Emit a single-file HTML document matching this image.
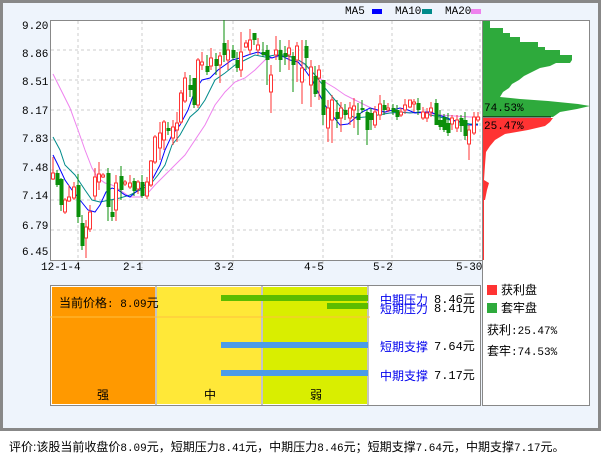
<!DOCTYPE html>
<html><head><meta charset="utf-8"><style>
*{margin:0;padding:0}
body{width:601px;height:456px;background:#fff;position:relative;overflow:hidden;font-family:"Liberation Mono","Noto Sans CJK SC",monospace;}
.frame{position:absolute;left:0;top:0;width:595px;height:425px;border:3px solid #888;background:#eef4fc}
.t{position:absolute;font-size:11px;color:#000;white-space:nowrap;line-height:12px}
.c{position:absolute;font-family:"Liberation Sans","Noto Sans CJK SC",sans-serif;font-size:12px;white-space:nowrap;line-height:14px}
</style></head><body>
<div class="frame"></div>
<svg style="position:absolute;left:0;top:0" width="601" height="456">
<rect x="50.5" y="20.5" width="432" height="240" fill="#fff" stroke="#888"/>
<rect x="482.5" y="20.5" width="107" height="385" fill="#fff" stroke="#888"/>
<g stroke="#ccc" stroke-dasharray="3,3">
<line x1="51" x2="482" y1="50" y2="50"/><line x1="51" x2="482" y1="80" y2="80"/><line x1="51" x2="482" y1="110" y2="110"/><line x1="51" x2="482" y1="140" y2="140"/><line x1="51" x2="482" y1="170" y2="170"/><line x1="51" x2="482" y1="200" y2="200"/><line x1="51" x2="482" y1="230" y2="230"/>
<line x1="78" x2="78" y1="21" y2="268"/><line x1="142" x2="142" y1="21" y2="268"/><line x1="233" x2="233" y1="21" y2="268"/><line x1="323" x2="323" y1="21" y2="268"/><line x1="392" x2="392" y1="21" y2="268"/><line x1="480" x2="480" y1="21" y2="268"/>
</g>
<polyline fill="none" stroke="#ee82ee" points="53,74 60,88 70,108 78,130 85,150 92,168 98,178 105,183 112,185 120,190 130,197 140,197 148,193 155,185 165,175 175,165 185,155 195,140 205,125 215,105 225,92 235,82 245,78 255,70 265,60 275,57 285,56 295,58 305,65 315,75 325,82 335,88 345,95 355,100 365,105 375,110 385,113 395,113 405,112 415,113 425,113 440,115 455,116 470,117 478,117"/>
<polyline fill="none" stroke="#008b8b" points="53,137 60,150 65,165 75,175 85,190 92,200 100,202 110,200 120,198 130,195 140,190 150,185 158,175 165,165 172,145 180,135 190,117 198,110 205,100 215,80 225,73 235,65 245,60 255,55 265,57 275,55 285,55 295,58 305,64 315,75 325,88 335,100 345,112 355,118 365,117 378,115 390,113 400,112 410,113 420,112 430,115 440,117 450,120 460,122 470,124 478,124"/>
<polyline fill="none" stroke="#0000ff" points="53,155 58,165 65,180 72,190 80,200 88,210 95,212 100,205 106,192 112,188 118,190 125,195 130,197 138,190 145,185 152,180 160,165 165,150 172,135 180,125 188,110 195,90 202,80 210,78 218,70 225,65 232,60 240,58 248,55 258,52 265,55 272,58 280,55 290,60 298,62 305,70 312,80 318,92 325,105 332,115 340,125 348,124 355,118 362,112 370,108 378,110 385,112 393,110 400,108 408,110 415,113 423,112 430,112 438,115 445,117 452,120 460,122 468,125 478,125"/>
<g id="cd"></g>
<path fill="none" stroke="#ff3333" d="M53 157V180M65 198V214M69 185V202M74 182V200M86 220V258M90 205V232M95 168V200M99 162V190M103 173V178M116 175V221M125 180V186M130 175V189M138 180V194M147 177V199M151 160V187M155 135V164M160 122V160M164 120V150M173 120V145M177 112V142M181 90V124M185 72V103M198 58V108M202 52V70M211 48V70M220 52V83M228 40V70M241 32V77M246 40V48M250 29V55M258 38V55M271 65V113M276 36V60M289 40V70M297 42V82M302 40V104M311 60V107M319 65V100M328 100V142M332 95V143M341 102V132M350 102V125M354 98V128M375 106V128M380 95V120M388 103V112M401 108V117M405 99V114M410 100V108M414 99V112M423 107V120M427 108V122M431 102V117M452 115V130M457 115V132M469 125V160M474 112V135M478 112V122"/>
<g fill="#fff" stroke="#ff3333">
<rect x="51.5" y="173" width="3" height="6"/><rect x="63.5" y="200" width="3" height="12"/><rect x="67.5" y="197" width="3" height="4"/><rect x="72.5" y="187" width="3" height="11"/><rect x="84.5" y="227" width="3" height="11"/><rect x="88.5" y="212" width="3" height="17"/><rect x="93.5" y="177" width="3" height="19"/><rect x="97.5" y="174" width="3" height="8"/><rect x="101.5" y="175" width="3" height="2"/><rect x="114.5" y="183" width="3" height="27"/><rect x="123.5" y="182" width="3" height="2"/><rect x="128.5" y="183" width="3" height="4"/><rect x="136.5" y="182" width="3" height="7"/><rect x="145.5" y="182" width="3" height="14"/><rect x="149.5" y="161" width="3" height="24"/><rect x="153.5" y="137" width="3" height="25"/><rect x="158.5" y="133" width="3" height="15"/><rect x="162.5" y="122" width="3" height="18"/><rect x="171.5" y="127" width="3" height="11"/><rect x="175.5" y="123" width="3" height="7"/><rect x="179.5" y="93" width="3" height="29"/><rect x="183.5" y="78" width="3" height="23"/><rect x="196.5" y="60" width="3" height="45"/><rect x="200.5" y="62" width="3" height="3"/><rect x="209.5" y="58" width="3" height="8"/><rect x="218.5" y="56" width="3" height="9"/><rect x="226.5" y="50" width="3" height="10"/><rect x="239.5" y="52" width="3" height="18"/><rect x="244.5" y="43" width="3" height="4"/><rect x="248.5" y="40" width="3" height="10"/><rect x="256.5" y="45" width="3" height="5"/><rect x="269.5" y="75" width="3" height="17"/><rect x="274.5" y="50" width="3" height="5"/><rect x="287.5" y="48" width="3" height="7"/><rect x="295.5" y="46" width="3" height="14"/><rect x="300.5" y="68" width="3" height="14"/><rect x="309.5" y="67" width="3" height="18"/><rect x="317.5" y="70" width="3" height="8"/><rect x="326.5" y="108" width="3" height="20"/><rect x="330.5" y="100" width="3" height="20"/><rect x="339.5" y="108" width="3" height="10"/><rect x="348.5" y="108" width="3" height="10"/><rect x="352.5" y="106" width="3" height="4"/><rect x="373.5" y="112" width="3" height="13"/><rect x="378.5" y="104" width="3" height="11"/><rect x="386.5" y="108" width="3" height="2"/><rect x="399.5" y="112" width="3" height="3"/><rect x="403.5" y="105" width="3" height="5"/><rect x="408.5" y="100" width="3" height="7"/><rect x="412.5" y="102" width="3" height="2"/><rect x="421.5" y="112" width="3" height="6"/><rect x="425.5" y="113" width="3" height="5"/><rect x="429.5" y="108" width="3" height="4"/><rect x="450.5" y="118" width="3" height="6"/><rect x="455.5" y="120" width="3" height="8"/><rect x="467.5" y="130" width="3" height="14"/><rect x="472.5" y="117" width="3" height="16"/><rect x="476.5" y="117" width="3" height="3"/>
</g>
<path fill="none" stroke="#0a8f0a" d="M57 170V187M61 178V211M78 174V223M82 215V250M108 168V221M112 200V221M121 166V200M134 178V196M142 175V198M168 122V135M190 75V97M194 78V108M207 55V75M216 53V75M224 20V62M233 45V60M237 52V72M254 33V45M263 42V57M267 45V85M280 40V72M285 46V65M293 52V92M306 40V70M315 66V97M323 80V125M337 100V128M345 104V120M358 103V135M362 100V113M367 110V145M371 108V130M384 100V115M393 104V115M397 105V120M418 98V115M436 99V125M440 110V130M444 114V132M448 113V136M461 115V132M465 112V140"/>
<g fill="#0a8f0a">
<rect x="55.5" y="173" width="4" height="12"/><rect x="59.5" y="179" width="4" height="26"/><rect x="76.5" y="185" width="4" height="32"/><rect x="80.5" y="223" width="4" height="23"/><rect x="106.5" y="173" width="4" height="34"/><rect x="110.5" y="212" width="4" height="5"/><rect x="119.5" y="176" width="4" height="14"/><rect x="132.5" y="181" width="4" height="10"/><rect x="140.5" y="182" width="4" height="14"/><rect x="166.5" y="128" width="4" height="3"/><rect x="188.5" y="85" width="4" height="5"/><rect x="192.5" y="78" width="4" height="27"/><rect x="205.5" y="66" width="4" height="6"/><rect x="214.5" y="59" width="4" height="7"/><rect x="222.5" y="43" width="4" height="12"/><rect x="231.5" y="50" width="4" height="8"/><rect x="235.5" y="60" width="4" height="8"/><rect x="252.5" y="33" width="4" height="7"/><rect x="261.5" y="52" width="4" height="3"/><rect x="265.5" y="50" width="4" height="10"/><rect x="278.5" y="50" width="4" height="10"/><rect x="283.5" y="53" width="4" height="4"/><rect x="291.5" y="56" width="4" height="9"/><rect x="304.5" y="46" width="4" height="12"/><rect x="313.5" y="76" width="4" height="18"/><rect x="321.5" y="80" width="4" height="35"/><rect x="335.5" y="112" width="4" height="7"/><rect x="343.5" y="110" width="4" height="5"/><rect x="356.5" y="113" width="4" height="7"/><rect x="360.5" y="108" width="4" height="2"/><rect x="365.5" y="112" width="4" height="18"/><rect x="369.5" y="113" width="4" height="7"/><rect x="382.5" y="105" width="4" height="5"/><rect x="391.5" y="108" width="4" height="4"/><rect x="395.5" y="110" width="4" height="7"/><rect x="416.5" y="103" width="4" height="7"/><rect x="434.5" y="103" width="4" height="22"/><rect x="438.5" y="120" width="4" height="7"/><rect x="442.5" y="117" width="4" height="13"/><rect x="446.5" y="123" width="4" height="10"/><rect x="459.5" y="118" width="4" height="8"/><rect x="463.5" y="120" width="4" height="16"/>
</g>
<polygon fill="#2eaa3c" points="483,21 490,21 490,28 503,28 503,33 510,33 510,37 520,37 520,42 538,42 538,47 545,47 545,50 560,50 560,55 572,55 572,60 570,63 556,63 550,66 540,68 532,72 524,76 519,80 512,84 509,88 503,92 500,97 520,99 548,101 578,104 590,106 577,109 560,112 553,117 483,117"/>
<line x1="483" x2="551" y1="117" y2="117" stroke="#000"/>
<polygon fill="#ff3333" points="483,118 553,118 550,122 545,126 528,130 505,134 495,140 490,146 486,152 485,165 484,180 489,183 487,190 485,200 484,200 484,260 483,260"/>
<rect x="487" y="285" width="10" height="10" fill="#ff3333"/>
<rect x="487" y="303" width="10" height="10" fill="#2eaa3c"/>
<rect x="372" y="9" width="10" height="5" fill="#0000ff"/>
<rect x="422" y="9" width="10" height="5" fill="#008b8b"/>
<rect x="471" y="9" width="10" height="5" fill="#ee82ee"/>
<rect x="50.5" y="285.5" width="430" height="120" fill="#fff" stroke="#888"/>
<rect x="52" y="287" width="103" height="117" fill="#ff9900"/>
<rect x="157" y="287" width="104" height="117" fill="#ffe838"/>
<rect x="263" y="287" width="104" height="117" fill="#d9ee00"/>
<line x1="156" x2="156" y1="286" y2="405" stroke="#888"/><line x1="262" x2="262" y1="286" y2="405" stroke="#888"/><line x1="368" x2="368" y1="286" y2="405" stroke="#888"/>
<line x1="50" x2="370" y1="317" y2="317" stroke="#ffc040"/>
<rect x="221" y="295" width="147" height="6" fill="#5cbc00"/>
<rect x="327" y="303" width="41" height="6" fill="#5cbc00"/>
<rect x="221" y="342" width="147" height="6" fill="#4b9be8"/>
<rect x="221" y="370" width="147" height="6" fill="#4b9be8"/>
</svg>
<div class="t" style="left:345px;top:6px">MA5</div>
<div class="t" style="left:395px;top:6px">MA10</div>
<div class="t" style="left:445px;top:6px">MA20</div>
<div class="t" style="left:22px;top:21px">9.20</div>
<div class="t" style="left:22px;top:49px">8.86</div>
<div class="t" style="left:22px;top:77px">8.51</div>
<div class="t" style="left:22px;top:106px">8.17</div>
<div class="t" style="left:22px;top:134px">7.83</div>
<div class="t" style="left:22px;top:163px">7.48</div>
<div class="t" style="left:22px;top:191px">7.14</div>
<div class="t" style="left:22px;top:221px">6.79</div>
<div class="t" style="left:22px;top:247px">6.45</div>
<div class="t" style="left:41px;top:262px">12-1-4</div>
<div class="t" style="left:123px;top:262px">2-1</div>
<div class="t" style="left:214px;top:262px">3-2</div>
<div class="t" style="left:304px;top:262px">4-5</div>
<div class="t" style="left:373px;top:262px">5-2</div>
<div class="t" style="left:456px;top:262px">5-30</div>
<div class="t" style="left:484px;top:103px">74.53%</div>
<div class="t" style="left:484px;top:121px">25.47%</div>
<div class="c" style="left:501px;top:283px">获利盘</div>
<div class="c" style="left:501px;top:301px">套牢盘</div>
<div class="c" style="left:487px;top:323px">获利<span style="font-family:'Liberation Mono',monospace;font-size:11px">:25.47%</span></div>
<div class="c" style="left:487px;top:344px">套牢<span style="font-family:'Liberation Mono',monospace;font-size:11px">:74.53%</span></div>
<div class="c" style="left:59px;top:296px">当前价格<span style="font-family:'Liberation Mono',monospace;font-size:11px">: 8.09</span>元</div>
<div class="c" style="left:380px;top:293px;color:#0000ee">中期压力</div>
<div class="c" style="left:380px;top:302px;color:#0000ee">短期压力</div>
<div class="c" style="left:434px;top:293px;font-family:'Liberation Mono','Noto Sans CJK SC',monospace">8.46元</div>
<div class="c" style="left:434px;top:302px;font-family:'Liberation Mono','Noto Sans CJK SC',monospace">8.41元</div>
<div class="c" style="left:380px;top:340px;color:#0000ee">短期支撑</div>
<div class="c" style="left:434px;top:340px;font-family:'Liberation Mono','Noto Sans CJK SC',monospace">7.64元</div>
<div class="c" style="left:380px;top:369px;color:#0000ee">中期支撑</div>
<div class="c" style="left:434px;top:369px;font-family:'Liberation Mono','Noto Sans CJK SC',monospace">7.17元</div>
<div class="c" style="left:97px;top:388px">强</div>
<div class="c" style="left:204px;top:388px">中</div>
<div class="c" style="left:310px;top:388px">弱</div>
<div class="c" style="left:9px;top:440px">评价:该股当前收盘价<span style="font-family:'Liberation Mono';font-size:11px">8.09</span>元，短期压力<span style="font-family:'Liberation Mono';font-size:11px">8.41</span>元，中期压力<span style="font-family:'Liberation Mono';font-size:11px">8.46</span>元；短期支撑<span style="font-family:'Liberation Mono';font-size:11px">7.64</span>元，中期支撑<span style="font-family:'Liberation Mono';font-size:11px">7.17</span>元。</div>
</body></html>
